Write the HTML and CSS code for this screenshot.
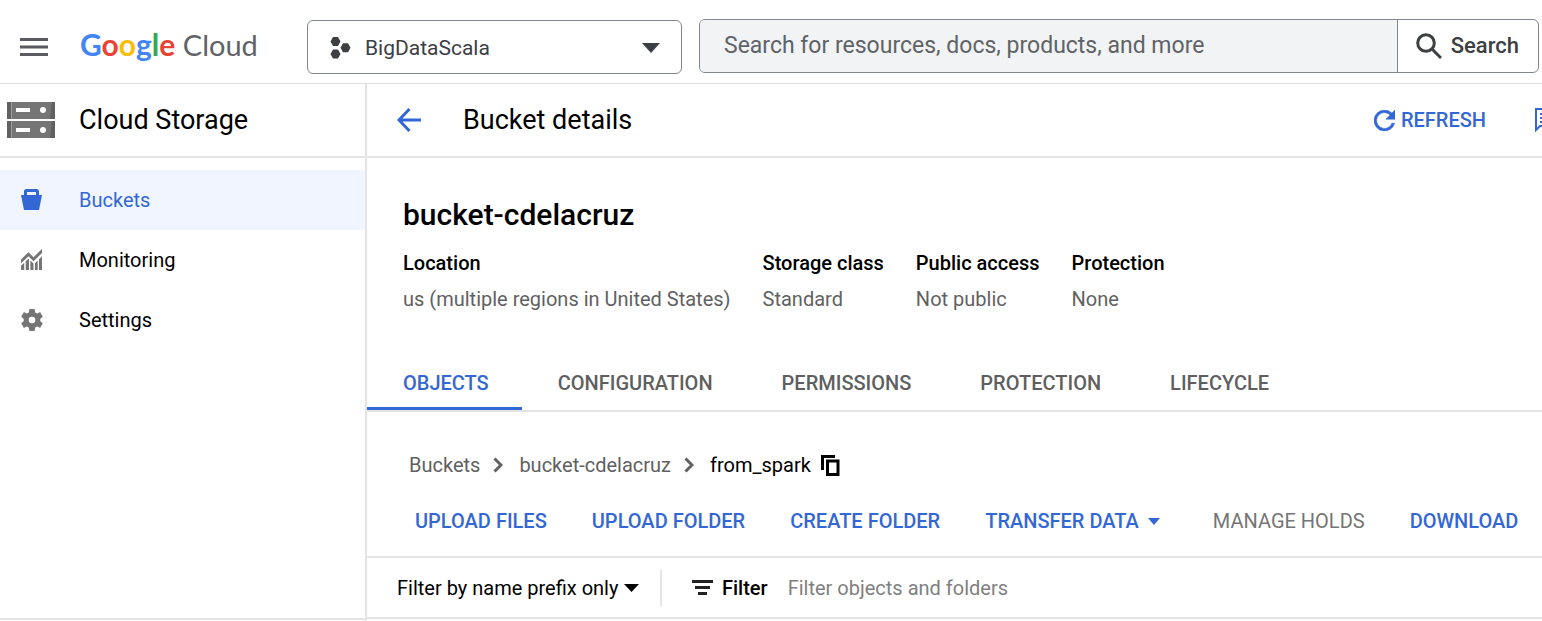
FILE: index.html
```html
<!DOCTYPE html>
<html lang="en">
<head>
<meta charset="utf-8">
<title>Bucket details – Cloud Storage</title>
<link rel="stylesheet" href="styles.css">
</head>
<body>
<header class="topbar">
  <button class="menu-button" type="button" aria-label="Main menu">
    <svg width="28" height="18" viewBox="0 0 28 18" fill="#5a5b5e"><path d="M0 0h28v3H0zM0 7.500h28v3H0zM0 15h28v3H0z"/></svg>
  </button>
  <a class="logo" href="#"><span class="logo-google"><span class="blue">G</span><span class="red">o</span><span class="yellow">o</span><span class="blue">g</span><span class="green">l</span><span class="red">e</span></span> <span class="logo-cloud">Cloud</span></a>
  <button class="project-picker" type="button" aria-haspopup="dialog">
    <svg width="21" height="22" viewBox="0 0 21 22" fill="#3c4043"><path d="M3 0h5l2.500 4.500L8 9H3L.5 4.500zM3 12.500h5l2.500 4.500L8 21.500H3L.5 17zM13 6.300h5l2.500 4.500L18 15.300h-5l-2.500-4.500z"/></svg>
    <span class="project-name">BigDataScala</span>
    <svg width="18" height="10" viewBox="0 0 18 10" fill="#3c4043"><path d="M0 0h18L9 10z"/></svg>
  </button>
  <form class="search" role="search">
    <input class="search-input" type="text" aria-label="Search" placeholder="Search for resources, docs, products, and more">
    <button class="search-button" type="button">
      <svg width="26" height="26" viewBox="0 0 26 26" fill="none" stroke="#3c4043" stroke-width="3"><circle cx="10" cy="10" r="8.300"/><path d="M16 16l9 9"/></svg>
      Search
    </button>
  </form>
</header>
<div class="layout">
  <aside class="sidebar">
    <div class="product">
      <svg width="48" height="36" viewBox="0 0 48 36"><path fill="#757575" d="M0 0h48v17H0zM0 19h48v17H0z"/><path fill="#616161" d="M0 0h4v17H0zM0 19h4v17H0zM45 0h3v17h-5zM45 19h3v17h-5z"/><path fill="#9e9e9e" d="M4 0h1v17H4zM4 19h1v17H4z"/><path fill="#fff" d="M9 6h14v4H9zM9 26h14v4H9z"/><circle cx="36" cy="8" r="3" fill="#fff"/><circle cx="36" cy="28" r="3" fill="#fff"/></svg>
      <h2 class="product-name">Cloud Storage</h2>
    </div>
    <nav class="side-nav">
      <a class="side-item active" href="#"><svg width="22" height="22" viewBox="0 0 22 22" fill="#3367d6"><path fill-rule="evenodd" d="M0 6H3V2.500Q3 0 5.500 0h10Q18 0 18 2.500V6h3L18 21H3zM6 3v3h9V3z"/></svg>Buckets</a>
      <a class="side-item" href="#"><svg width="22" height="22" viewBox="0 0 22 22" fill="#757575"><path d="M0 10.500L7.500 3.200l5 5L21 0v4L12.500 12.300l-5-5L0 14.500z"/><path d="M0 16.800l3.200-3V21H0zM4.700 12.300l2.800-2.600.5.500V21H4.700zM9.400 11.600l3.100 3V21H9.400zM14 14.200l2.700-2.700V21H14zM18 10.200l3-3V21h-3z"/></svg>Monitoring</a>
      <a class="side-item" href="#"><svg width="22" height="22" viewBox="2 2 20 20" fill="#757575"><path d="M19.430 12.980c.04-.32.070-.64.070-.98s-.03-.66-.07-.98l2.110-1.650c.19-.15.240-.42.120-.64l-2-3.460c-.12-.22-.39-.3-.61-.22l-2.490 1c-.52-.4-1.080-.73-1.690-.98l-.38-2.650C14.460 2.180 14.250 2 14 2h-4c-.25 0-.46.18-.49.42l-.38 2.650c-.61.25-1.170.59-1.690.98l-2.490-1c-.23-.09-.49 0-.61.220l-2 3.460c-.13.22-.07.490.12.640l2.110 1.650c-.04.32-.07.650-.07.980s.03.660.07.980l-2.110 1.650c-.19.15-.24.420-.12.640l2 3.460c.12.220.39.300.61.220l2.490-1c.52.400 1.080.730 1.690.980l.38 2.650c.03.240.24.420.49.420h4c.25 0 .46-.18.490-.42l.38-2.650c.61-.25 1.170-.59 1.690-.98l2.490 1c.23.090.49 0 .61-.22l2-3.460c.12-.22.070-.49-.12-.64zM12 15a3 3 0 1 1 0-6 3 3 0 0 1 0 6z"/></svg>Settings</a>
    </nav>
    <div class="side-footer"></div>
  </aside>
  <main class="main">
    <div class="page-header">
      <button class="back" type="button" aria-label="Back"><svg width="24" height="24" viewBox="0 0 24 24" fill="none" stroke="#3367d6" stroke-width="3"><path d="M12.500 1L2 12l10.500 11M2 12h22"/></svg></button>
      <h1 class="page-title">Bucket details</h1>
      <button class="refresh" type="button"><svg width="21" height="21" viewBox="4 4 16 16" fill="#3367d6"><path d="M17.650 6.350A7.960 7.960 0 0 0 12 4a8 8 0 1 0 7.730 10h-2.080A6 6 0 1 1 12 6c1.660 0 3.140.690 4.220 1.780L13 11h7V4z" stroke="#3367d6" stroke-width=".4"/></svg>Refresh</button>
      <button class="feedback" type="button" aria-label="Feedback"><svg width="24" height="24" viewBox="0 0 24 24" fill="none" stroke="#3367d6" stroke-width="2"><path d="M1 22V1h21v17H5zM5 6h14M5 10h14M5 14h14"/></svg></button>
    </div>
    <section class="bucket">
      <h2 class="bucket-name">bucket-cdelacruz</h2>
      <dl class="facts">
        <div><dt>Location</dt><dd>us (multiple regions in United States)</dd></div>
        <div><dt>Storage class</dt><dd>Standard</dd></div>
        <div><dt>Public access</dt><dd>Not public</dd></div>
        <div><dt>Protection</dt><dd>None</dd></div>
      </dl>
    </section>
    <nav class="tabs">
      <a class="tab active" href="#">Objects</a>
      <a class="tab" href="#">Configuration</a>
      <a class="tab" href="#">Permissions</a>
      <a class="tab" href="#">Protection</a>
      <a class="tab" href="#">Lifecycle</a>
    </nav>
    <nav class="breadcrumb" aria-label="Breadcrumb">
      <a class="crumb" href="#">Buckets</a>
      <svg class="chevron" width="10" height="16" viewBox="0 0 10 16"><path d="M1.500 1.500L8 8l-6.500 6.500"/></svg>
      <a class="crumb" href="#">bucket-cdelacruz</a>
      <svg class="chevron" width="10" height="16" viewBox="0 0 10 16"><path d="M1.500 1.500L8 8l-6.500 6.500"/></svg>
      <span class="crumb-current">from_spark</span>
      <button class="copy" type="button" aria-label="Copy path"><svg width="19" height="21" viewBox="0 0 19 21" fill="none" stroke="#000" stroke-width="3"><path d="M1.500 15V1.500H14"/><path d="M6.500 6h10.500v13.500H6.500z"/></svg></button>
    </nav>
    <div class="actions">
      <button class="action" type="button">Upload files</button>
      <button class="action" type="button">Upload folder</button>
      <button class="action" type="button">Create folder</button>
      <button class="action with-arrow" type="button" aria-haspopup="menu">Transfer data<svg width="12" height="7" viewBox="0 0 12 7" fill="#3367d6"><path d="M0 0h12L6 7z"/></svg></button>
      <button class="action" type="button" disabled>Manage holds</button>
      <button class="action" type="button">Download</button>
    </div>
    <div class="filter-bar">
      <div class="prefix">
        <select class="prefix-select" aria-label="Filter scope"><option>Filter by name prefix only</option></select>
        <svg width="15" height="8" viewBox="0 0 15 8"><path d="M0 0h15L7.500 8z"/></svg>
      </div>
      <svg class="filter-icon" width="21" height="15" viewBox="0 0 21 15" fill="#212121"><path d="M0 0h21v3H0zM3 6h15v3H3zM6 12h9v3H6z"/></svg>
      <label class="filter-label" for="filter">Filter</label>
      <input class="filter-input" id="filter" type="text" placeholder="Filter objects and folders">
    </div>
  </main>
</div>
</body>
</html>
```
FILE: styles.css
```css
* { box-sizing: border-box; }
body {
  margin: 0;
  min-height: 100vh;
  display: flex;
  flex-direction: column;
  overflow-x: hidden;
  font: 400 20px/24px Roboto, sans-serif;
  color: #000;
  background: #fff;
}
h1, h2, dl, dd { margin: 0; font-weight: 400; }
a { color: inherit; text-decoration: none; }
button, input, select {
  margin: 0;
  padding: 0;
  border: 0;
  background: none;
  font: inherit;
  color: inherit;
}
svg { display: block; flex: none; }

.topbar {
  display: flex;
  align-items: center;
  height: 84px;
  padding: 10px 3px 0 20px;
  border-bottom: 1px solid #dadce0;
}
.menu-button { margin-right: 32px; }
.logo {
  width: 227px;
  padding-bottom: 4px;
  font: 400 29px/40px Lato, sans-serif;
  white-space: nowrap;
  color: #5f6368;
}
.logo-google { font-size: 30px; font-weight: 700; }
.blue { color: #4285f4; }
.red { color: #ea4335; }
.yellow { color: #fbbc04; }
.green { color: #34a853; }
.project-picker {
  display: flex;
  align-items: center;
  width: 375px;
  height: 54px;
  padding: 2px 21px 0 22px;
  border: 1px solid #80868b;
  border-radius: 6px;
  font-size: 21px;
  color: #3c4043;
}
.project-name { flex: 1; margin-left: 14px; text-align: left; }
.search {
  flex: 1;
  display: flex;
  height: 54px;
  margin: 0 0 2px 17px;
  border: 1px solid #80868b;
  border-radius: 6px;
  overflow: hidden;
}
.search-input {
  flex: 1;
  min-width: 0;
  padding: 0 24px;
  background: #f1f3f4;
  font-size: 23px;
}
.search-input::placeholder { color: #5f6368; opacity: 1; }
.search-button {
  display: flex;
  align-items: center;
  gap: 9px;
  padding: 0 19px 0 18px;
  border-left: 1px solid #80868b;
  font-size: 22px;
  font-weight: 500;
  color: #3c4043;
}

.layout { flex: 1; display: flex; }
.sidebar {
  display: flex;
  flex-direction: column;
  width: 367px;
  flex: none;
  border-right: 2px solid #e4e4e4;
}
.side-footer { height: 3px; margin-top: auto; border-top: 2px solid #e4e4e4; }
.product {
  display: flex;
  align-items: center;
  gap: 24px;
  height: 74px;
  padding-left: 7px;
  border-bottom: 2px solid #e4e4e4;
}
.product-name, .page-title { font-size: 27px; line-height: 32px; }
.side-nav { padding-top: 12px; }
.side-item {
  display: flex;
  align-items: center;
  gap: 36px;
  height: 60px;
  padding-left: 21px;
}
.side-item.active { background: #f0f5ff; color: #3367d6; }

.main { flex: 1; min-width: 0; }
.page-header {
  display: flex;
  align-items: center;
  height: 74px;
  padding-left: 30px;
  border-bottom: 2px solid #e4e4e4;
}
.page-title { margin: 0 auto 0 42px; }
.refresh {
  display: flex;
  align-items: center;
  gap: 6px;
  margin-right: 49px;
  font-weight: 500;
  text-transform: uppercase;
  color: #3367d6;
}
.feedback { width: 7px; overflow: hidden; }

.bucket { padding: 37px 36px 39px; }
.bucket-name { font-size: 30px; line-height: 40px; font-weight: 500; }
.facts { display: flex; gap: 32px; padding-top: 10px; white-space: nowrap; }
.facts dt { font-weight: 500; line-height: 36px; }
.facts dd { line-height: 36px; color: #616161; }

.tabs { display: flex; border-bottom: 2px solid #e4e4e4; }
.tab {
  padding: 15px 33px 12px 36px;
  border-bottom: 3px solid transparent;
  font-weight: 500;
  text-transform: uppercase;
  color: #5f5f5f;
}
.tab.active { color: #3367d6; border-bottom-color: #3367d6; }

.breadcrumb {
  display: flex;
  align-items: center;
  padding: 41px 42px 0;
  color: #616161;
}
.chevron { margin: 0 16px 0 13px; fill: none; stroke: #616161; stroke-width: 3; }
.crumb-current { color: #000; }
.copy { margin-left: 10px; }

.actions {
  display: flex;
  gap: 45px;
  padding: 32px 0 23px 48px;
  border-bottom: 2px solid #e4e4e4;
  white-space: nowrap;
  overflow: hidden;
}
.action { font-weight: 500; text-transform: uppercase; color: #3367d6; }
.action:disabled { font-weight: 400; color: #757575; }
.with-arrow { display: flex; align-items: center; gap: 9px; padding-right: 8px; }

.filter-bar {
  display: flex;
  align-items: center;
  height: 61px;
  padding-left: 30px;
  border-bottom: 2px solid #e4e4e4;
}
.prefix {
  display: flex;
  align-items: center;
  gap: 5px;
  height: 36px;
  padding-right: 21px;
  border-right: 2px solid #e4e4e4;
}
.prefix-select { appearance: none; }
.filter-icon { margin-left: 30px; }
.filter-label { margin: 0 20px 0 9px; font-weight: 500; }
.filter-input { flex: 1; min-width: 0; }
.filter-input::placeholder { color: #808080; opacity: 1; }
```
